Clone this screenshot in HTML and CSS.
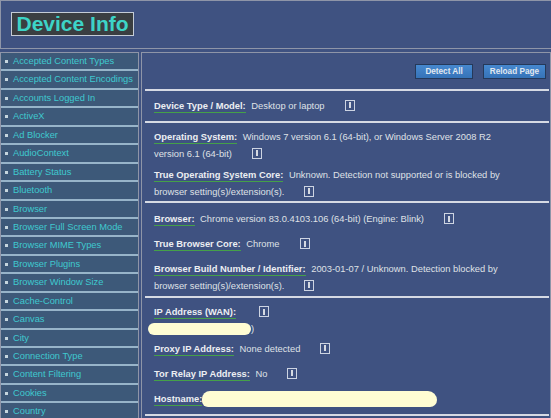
FILE: index.html
```html
<!DOCTYPE html>
<html>
<head>
<meta charset="utf-8">
<link rel="stylesheet" href="styles.css">
</head>
<body>
<header class="top"><h1 class="title">Device Info</h1></header>
<div class="layout">
  <nav class="side">
    <ul class="menu">
      <li>Accepted Content Types</li>
      <li>Accepted Content Encodings</li>
      <li>Accounts Logged In</li>
      <li>ActiveX</li>
      <li>Ad Blocker</li>
      <li>AudioContext</li>
      <li>Battery Status</li>
      <li>Bluetooth</li>
      <li>Browser</li>
      <li>Browser Full Screen Mode</li>
      <li>Browser MIME Types</li>
      <li>Browser Plugins</li>
      <li>Browser Window Size</li>
      <li>Cache-Control</li>
      <li>Canvas</li>
      <li>City</li>
      <li>Connection Type</li>
      <li>Content Filtering</li>
      <li>Cookies</li>
      <li>Country</li>
    </ul>
  </nav>
  <main class="content">
    <div class="actions">
      <button class="btn">Detect All</button>
      <button class="btn btn-narrow">Reload Page</button>
    </div>
    <section class="sec">
      <div class="row"><span class="label">Device Type / Model:</span> Desktop or laptop<span class="info"></span></div>
    </section>
    <section class="sec sec2">
      <div class="row"><span class="label">Operating System:</span> Windows 7 version 6.1 (64-bit), or Windows Server 2008 R2 version 6.1 (64-bit)<span class="info"></span></div>
      <div class="row"><span class="label">True Operating System Core:</span> Unknown. Detection not supported or is blocked by browser setting(s)/extension(s).<span class="info"></span></div>
    </section>
    <section class="sec sec3">
      <div class="row"><span class="label">Browser:</span> Chrome version 83.0.4103.106 (64-bit) (Engine: Blink)<span class="info"></span></div>
      <div class="row"><span class="label">True Browser Core:</span> Chrome<span class="info"></span></div>
      <div class="row"><span class="label">Browser Build Number / Identifier:</span> 2003-01-07 / Unknown. Detection blocked by browser setting(s)/extension(s).<span class="info"></span></div>
    </section>
    <section class="sec sec4">
      <div class="row"><span class="label">IP Address (WAN):</span><span class="info"></span><br><span class="blot blot-ip"></span>)</div>
      <div class="row"><span class="label">Proxy IP Address:</span> None detected<span class="info"></span></div>
      <div class="row"><span class="label">Tor Relay IP Address:</span> No<span class="info"></span></div>
      <div class="row"><span class="label label-tight">Hostname:</span><span class="blot blot-host"></span></div>
    </section>
  </main>
</div>
</body>
</html>
```
FILE: styles.css
```css
html, body {
  margin: 0;
  padding: 0;
  overflow: hidden;
}
body {
  background: #3f5281;
  font-family: "Liberation Sans", Arial, sans-serif;
  width: 551px;
  height: 418px;
}
.top {
  height: 49px;
  box-sizing: border-box;
  border-top: 1px solid #8e95a8;
  border-left: 1px solid #8e95a8;
  border-bottom: 1px solid #8e95a8;
  padding: 11px 0 0 10px;
}
.title {
  display: inline-block;
  margin: 0;
  font-size: 21px;
  font-weight: bold;
  line-height: 21.5px;
  color: #3dd3c7;
  background: #3a3e41;
  border: 1px solid #c4ccd6;
  padding: 0 4px 0 4.5px;
}
.layout {
  display: flex;
  gap: 2px;
  padding-top: 3px;
  align-items: flex-start;
}
.side {
  width: 139px;
  flex: none;
  box-sizing: border-box;
  border: 1px solid #8e95a8;
  border-bottom: none;
  background: #3d5878;
}
.menu {
  list-style: none;
  margin: 0;
  padding: 0;
}
.menu li {
  position: relative;
  height: 16.45px;
  line-height: 16.45px;
  padding-left: 12px;
  font-size: 9.3px;
  color: #3fc9cf;
  white-space: nowrap;
  border-bottom: 2px solid #97b4c9;
  background: #3d5979;
}
.menu li::before {
  content: "";
  position: absolute;
  left: 4px;
  top: 7px;
  width: 3px;
  height: 3px;
  background: #c6d6de;
}
.content {
  flex: 1;
  min-width: 0;
  border: 1px solid #8e95a8;
  border-bottom: none;
  padding: 0 1px 0 3px;
  height: 380px;
}
.actions {
  display: flex;
  justify-content: flex-end;
  gap: 10px;
  padding: 11px 3px 10px 0;
}
.btn {
  font-family: "Liberation Sans", Arial, sans-serif;
  font-size: 8.2px;
  font-weight: bold;
  color: #e2e8f0;
  background: linear-gradient(#4688cf, #3673b8);
  border: 1px solid #25395a;
  height: 15px;
  padding: 0 9px;
  margin: 0;
  line-height: 13px;
}
.btn-narrow {
  padding: 0 6px;
}
.sec {
  display: flex;
  flex-direction: column;
  gap: 3.5px;
  border-top: 2px solid #d6dae4;
  padding: 6.5px 0 1.5px 9px;
}
.sec4 {
  border-bottom: 2px solid #d6dae4;
}
.sec2 { padding-top: 6.5px; padding-bottom: 1px; gap: 5px; }
.sec3 { padding-top: 8px; padding-bottom: 1.5px; }
.sec4 { padding-top: 6.5px; padding-bottom: 1.5px; }
.row {
  min-height: 21.5px;
  line-height: 16.5px;
  font-size: 9.35px;
  color: #dfe1e6;
  padding-right: 40px;
}
.label {
  font-weight: bold;
  color: #eceef2;
  border-bottom: 1px solid #45a049;
  padding-bottom: 1px;
  margin-right: 3px;
}
.label-tight {
  margin-right: 0;
}
.info {
  display: inline-block;
  position: relative;
  width: 8px;
  height: 9px;
  border: 1px solid #cdd4e2;
  margin-left: 20px;
  vertical-align: -2px;
}
.info::after {
  content: "";
  position: absolute;
  left: 3px;
  top: 1.5px;
  width: 2px;
  height: 6px;
  background: #d6dae2;
}
.blot {
  display: inline-block;
  background: #fffdd3;
  vertical-align: middle;
}
.blot-ip {
  width: 103px;
  height: 11.5px;
  margin-left: -6px;
  border-radius: 6px;
}
.blot-host {
  width: 235px;
  height: 15.5px;
  border-radius: 8px 9px 7px 6px;
}
```
